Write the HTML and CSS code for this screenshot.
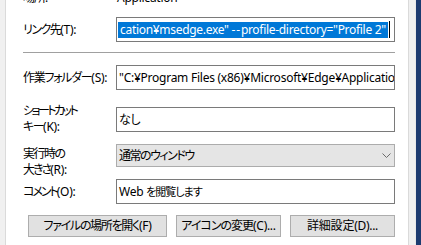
FILE: index.html
```html
<!DOCTYPE html>
<html lang="ja">
<head>
<meta charset="utf-8">
<link rel="stylesheet" href="styles.css">
</head>
<body>
<div class="window">
  <div class="page">
    <div class="row row-top">
      <span class="label ls1">場所:</span>
      <span class="value">Application</span>
    </div>
    <div class="row row-link">
      <span class="label"><span class="ls15">リンク先</span><span class="lat">(T):</span></span>
      <div class="field field-link"><span class="sel">cation¥msedge.exe" <span class="dash">--</span>profile-directory="Profile 2"</span><span class="caret"></span></div>
    </div>
    <div class="separator"></div>
    <div class="row row-folder">
      <span class="label"><span class="ls13">作業フォルダー</span><span class="lat">(S):</span></span>
      <div class="field">"C:¥Program Files (x86)¥Microsoft¥Edge¥Application"</div>
    </div>
    <div class="row row-key">
      <span class="label label-2"><span class="ls25">ショートカット</span><br><span class="ls15">キー</span><span class="lat">(K):</span></span>
      <div class="field ls2">なし</div>
    </div>
    <div class="row row-run">
      <span class="label label-2 label-run"><span class="ls15">実行時の</span><br><span class="ls2">大きさ</span><span class="lat">(R):</span></span>
      <div class="select"><span class="ls15">通常のウィンドウ</span>
        <svg class="chev" width="9" height="5" viewBox="0 0 9 5"><path d="M0.5 0.5 L4.5 4.5 L8.5 0.5" fill="none" stroke="#6b6b6b" stroke-width="1"/></svg>
      </div>
    </div>
    <div class="row row-comment">
      <span class="label"><span class="ls2">コメント</span><span class="lat">(O):</span></span>
      <div class="field">Web <span class="ja-small">を閲覧します</span></div>
    </div>
    <div class="buttons">
      <div class="btn btn-wide"><span class="ls13">ファイルの場所を開く</span><span class="lat">(F)</span></div>
      <div class="btn"><span class="ls1">アイコンの変更</span><span class="lat">(C)...</span></div>
      <div class="btn"><span class="ls02">詳細設定</span><span class="lat">(D)...</span></div>
    </div>
  </div>
  <div class="gap"></div>
  <div class="edge"></div>
</div>
</body>
</html>
```

FILE: styles.css
```css
html, body {
  margin: 0;
  padding: 0;
}
body {
  font-family: "Noto Sans", "Noto Sans CJK JP", sans-serif;
  font-size: 12px;
  font-feature-settings: "palt";
  color: #000;
  background: #f0f0f0;
}
.ls02 { letter-spacing: -0.2px; }
.ls05 { letter-spacing: -0.5px; }
.ls1 { letter-spacing: -1px; }
.ls13 { letter-spacing: -1.3px; }
.ls15 { letter-spacing: -1.5px; }
.ls2 { letter-spacing: -2px; }
.ls25 { letter-spacing: -2.5px; }
.lat { letter-spacing: -0.3px; }
.ja-small {
  font-size: 11px;
  letter-spacing: -1px;
}
.window {
  display: flex;
  height: 245px;
  overflow: hidden;
  background: #f0f0f0;
}
.page {
  flex: none;
  width: 372px;
  margin-left: 5px;
  padding: 0 13px 0 17px;
  background: #fff;
  border-left: 1px solid #dadada;
  border-right: 1px solid #dadada;
  display: flex;
  flex-direction: column;
}
.gap {
  flex: none;
  width: 6px;
}
.edge {
  flex: 1;
  background: #1d3b70;
  border-left: 1px solid #e8e8e8;
}
.row {
  display: grid;
  grid-template-columns: 93px 279px;
  align-items: center;
}
.label {
  line-height: 16px;
  white-space: nowrap;
}
.row-top {
  margin-top: -10px;
  height: 14px;
  align-items: start;
}
.row-top .value {
  padding-left: 1px;
  line-height: 16px;
  letter-spacing: -0.25px;
}
.row-link { margin-top: 13px; }
.row-folder { margin-top: 12px; }
.row-key { margin-top: 13px; }
.row-run { margin-top: 9px; align-items: start; }
.row-comment { margin-top: 1px; }
.label-run { margin-top: 2px; }
.separator {
  margin-top: 10px;
  height: 1px;
  background: #a0a0a0;
}
.field {
  box-sizing: border-box;
  height: 25px;
  border: 1px solid #7a7a7a;
  padding: 0 2px;
  line-height: 23px;
  white-space: nowrap;
  overflow: hidden;
  background: #fff;
  letter-spacing: -0.25px;
}
.field-link {
  display: flex;
  align-items: center;
  padding-left: 1px;
}
.sel {
  background: #0078d7;
  color: #fff;
  line-height: 16px;
  padding: 0 2px 0 2px;
  letter-spacing: -0.3px;
}
.dash {
  letter-spacing: 0.8px;
}
.caret {
  flex: none;
  width: 1px;
  height: 17px;
  margin-left: 1px;
  background: #000;
}
.select {
  box-sizing: border-box;
  height: 23px;
  border: 1px solid #acacac;
  background: #e5e5e5;
  display: flex;
  align-items: center;
  justify-content: space-between;
  padding: 0 3px 0 2px;
  line-height: 21px;
}
.chev {
  display: block;
}
.buttons {
  display: flex;
  gap: 9px;
  margin-top: 11px;
  padding-left: 5px;
}
.btn {
  box-sizing: border-box;
  width: 105px;
  height: 22px;
  border: 1px solid #adadad;
  background: #e1e1e1;
  text-align: center;
  line-height: 20px;
  white-space: nowrap;
}
.btn-wide {
  width: 139px;
}
```
